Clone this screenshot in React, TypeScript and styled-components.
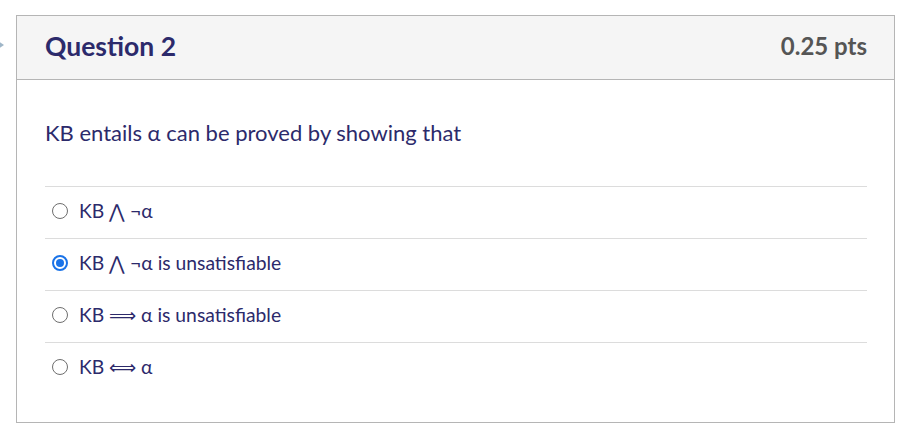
import React from "react";
import styled, { createGlobalStyle } from "styled-components";

const Global = createGlobalStyle`
  html, body { margin: 0; padding: 0; background: #ffffff; }
  body { font-family: Lato, "Open Sans", sans-serif; }
`;

const Page = styled.div`
  position: relative;
  width: 923px;
  height: 430px;
  padding: 15px 0 0 16px;
  box-sizing: border-box;
`;

const Marker = styled.div`
  position: absolute;
  left: -6px;
  top: 38px;
  width: 0;
  height: 0;
  border-top: 7px solid transparent;
  border-bottom: 7px solid transparent;
  border-left: 10px solid #9fb6c8;
`;

const Card = styled.section`
  width: 879px;
  height: 408px;
  box-sizing: border-box;
  border: 1px solid #b5b5b5;
  display: flex;
  flex-direction: column;
`;

const Header = styled.header`
  height: 64px;
  box-sizing: border-box;
  background: #f5f5f5;
  border-bottom: 1px solid #b5b5b5;
  display: flex;
  align-items: center;
  justify-content: space-between;
  padding: 0 27px 4px 28px;
`;

const Title = styled.h2`
  margin: 0;
  font-size: 26.5px;
  font-weight: 700;
  color: #2c2a6b;
`;

const Points = styled.span`
  font-size: 24px;
  font-weight: 700;
  color: #555;
`;

const Body = styled.div`
  padding: 40px 27px 0 28px;
`;

const Prompt = styled.p`
  margin: 0 0 40px;
  font-size: 22px;
  line-height: 26px;
  color: #2c2a6b;
`;

const Options = styled.ul`
  list-style: none;
  margin: 0;
  padding: 0;
`;

const Option = styled.li`
  height: 52px;
  border-top: 1px solid #dcdcdc;
  box-sizing: border-box;
  display: flex;
  align-items: center;
  gap: 12px;
  padding: 0 0 3px 8px;
  font-size: 19.3px;
  color: #2c2a6b;
`;

const Radio = styled.span<{ $checked?: boolean }>`
  width: 16px;
  height: 16px;
  margin-left: -1px;
  margin-right: -1px;
  border-radius: 50%;
  box-sizing: border-box;
  border: ${(p) => (p.$checked ? "2px solid #1a73e8" : "1.5px solid #6e6e6e")};
  background: #fff;
  display: flex;
  align-items: center;
  justify-content: center;
  &::after {
    content: "";
    display: ${(p) => (p.$checked ? "block" : "none")};
    width: 8px;
    height: 8px;
    border-radius: 50%;
    background: #1a73e8;
  }
`;

const Label = styled.span`
  margin-top: -1px;
`;

const options = [
  { text: "KB ⋀ ¬α", checked: false },
  { text: "KB ⋀ ¬α is unsatisfiable", checked: true },
  { text: "KB ⟹ α is unsatisfiable", checked: false },
  { text: "KB ⟺ α", checked: false },
];

export default function App() {
  return (
    <>
      <Global />
      <Page>
        <Marker />
        <Card>
          <Header>
            <Title>Question 2</Title>
            <Points>0.25 pts</Points>
          </Header>
          <Body>
            <Prompt>KB entails α can be proved by showing that</Prompt>
            <Options>
              {options.map((o) => (
                <Option key={o.text}>
                  <Radio $checked={o.checked} />
                  <Label>{o.text}</Label>
                </Option>
              ))}
            </Options>
          </Body>
        </Card>
      </Page>
    </>
  );
}
